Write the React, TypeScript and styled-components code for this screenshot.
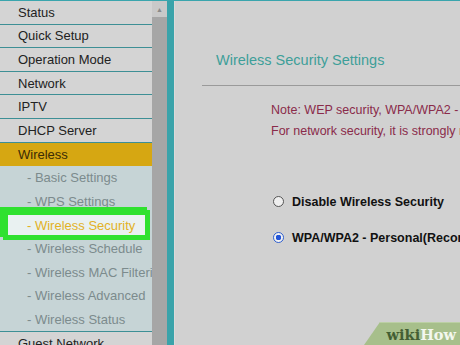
import React from "react";
import styled, { createGlobalStyle } from "styled-components";

const Global = createGlobalStyle`
  html, body { margin: 0; padding: 0; }
  body { font-family: "Liberation Sans", Arial, sans-serif; background: #d1d1d1; }
`;

const Page = styled.div`
  width: 460px;
  height: 345px;
  display: flex;
  overflow: hidden;
  border-top: 1px solid #3aa5ad;
  box-sizing: border-box;
  position: relative;
`;

const Sidebar = styled.nav`
  width: 152px;
  flex: none;
  display: flex;
  flex-direction: column;
  background: #d4d4d4;
`;

const MenuRow = styled.div<{ $active?: boolean }>`
  height: 23.6px;
  flex: none;
  box-sizing: border-box;
  display: flex;
  align-items: center;
  padding-left: 18px;
  font-size: 13px;
  color: ${(p) => (p.$active ? "#3a2c05" : "#222")};
  white-space: nowrap;
  border-bottom: ${(p) => (p.$active ? "none" : "1.6px solid #3d8f95")};
  background: ${(p) => (p.$active ? "#d6a712" : "#d4d4d4")};
`;

const SubMenu = styled.div`
  display: flex;
  flex-direction: column;
  background: #c6d4d6;
  border-bottom: 1.6px solid #3d8f95;
`;

const SubRow = styled.div`
  height: 23.6px;
  display: flex;
  align-items: center;
  padding-left: 27px;
  font-size: 13px;
  color: #7c8b8d;
  white-space: nowrap;
  overflow: hidden;
`;

const HighlightRow = styled.div`
  height: 23.6px;
  display: flex;
  align-items: center;
  padding: 0 7px 0 8px;
`;

const Mark = styled.div`
  flex: 1;
  height: 20px;
  display: flex;
  align-items: center;
  padding-left: 19px;
  font-size: 13px;
  color: #e2b126;
  background: #e9f1f1;
  white-space: nowrap;
  box-shadow: 0 0 0 5px #2fe12f, -3px -3px 0 5px #2fe12f;
  position: relative;
  z-index: 1;
`;

const Scrollbar = styled.div`
  width: 15px;
  flex: none;
  display: flex;
  flex-direction: column;
  background: #a6a6a6;
`;

const ScrollButton = styled.div`
  height: 16px;
  background: #c9c9c9;
  display: flex;
  align-items: center;
  justify-content: center;
  color: #8a8a8a;
  font-size: 7px;
`;

const Divider = styled.div`
  width: 7px;
  flex: none;
  background: #3aa3aa;
  border-right: 1px solid #dadada;
`;

const Main = styled.main`
  flex: 1;
  min-width: 0;
  background: #d1d1d1;
  overflow: hidden;
  display: flex;
  flex-direction: column;
`;

const Heading = styled.h2`
  margin: 51px 0 0 41px;
  font-size: 14.5px;
  line-height: 17px;
  font-weight: normal;
  color: #3e9f99;
  white-space: nowrap;
`;

const Rule = styled.div`
  margin: 16px 0 0 27px;
  height: 1px;
  background: #9a9a9a;
`;

const Note = styled.p`
  margin: 13.5px 0 0 96px;
  font-size: 12.5px;
  line-height: 21px;
  color: #8a2b4a;
  white-space: nowrap;
`;

const Options = styled.div`
  margin: 50px 0 0 97.5px;
  display: flex;
  flex-direction: column;
  gap: 16px;
`;

const Option = styled.label`
  height: 20px;
  display: flex;
  align-items: center;
  gap: 8.5px;
  font-size: 12.5px;
  font-weight: bold;
  color: #111;
  white-space: nowrap;
`;

const Radio = styled.span<{ $checked?: boolean }>`
  width: 11px;
  height: 11px;
  flex: none;
  box-sizing: border-box;
  border-radius: 50%;
  border: 1px solid ${(p) => (p.$checked ? "#2f5fd0" : "#555")};
  background: ${(p) =>
    p.$checked
      ? "radial-gradient(circle, #2456d8 0 2.6px, #f2f2f2 3px)"
      : "#efefef"};
`;

const Badge = styled.div`
  position: absolute;
  right: 0;
  bottom: 0;
  width: 96px;
  height: 23px;
  background: #a7bf8b;
  border-top: 1px solid #bcd0a5;
  clip-path: polygon(16px 0, 100% 0, 100% 100%, 0 100%);
  display: flex;
  align-items: center;
  justify-content: flex-end;
  padding-right: 4px;
  box-sizing: border-box;
  font-family: "DejaVu Serif", "Liberation Serif", serif;
  font-weight: bold;
  font-size: 14.5px;
`;

const Wiki = styled.span`
  color: #435e33;
`;

const How = styled.span`
  color: #f3f7ee;
`;

const mainItems = ["Status", "Quick Setup", "Operation Mode", "Network", "IPTV", "DHCP Server"];

export default function App() {
  return (
    <>
      <Global />
      <Page>
        <Sidebar>
          {mainItems.map((t) => (
            <MenuRow key={t}>{t}</MenuRow>
          ))}
          <MenuRow $active>Wireless</MenuRow>
          <SubMenu>
            <SubRow>- Basic Settings</SubRow>
            <SubRow>- WPS Settings</SubRow>
            <HighlightRow>
              <Mark>- Wireless Security</Mark>
            </HighlightRow>
            <SubRow>- Wireless Schedule</SubRow>
            <SubRow>- Wireless MAC Filteri</SubRow>
            <SubRow>- Wireless Advanced</SubRow>
            <SubRow>- Wireless Status</SubRow>
          </SubMenu>
          <MenuRow>Guest Network</MenuRow>
        </Sidebar>
        <Scrollbar>
          <ScrollButton>▲</ScrollButton>
        </Scrollbar>
        <Divider />
        <Main>
          <Heading>Wireless Security Settings</Heading>
          <Rule />
          <Note>
            Note: WEP security, WPA/WPA2 - Enterprise authentication are not supported
            <br />
            For network security, it is strongly recommended to enable wireless security
          </Note>
          <Options>
            <Option>
              <Radio />
              Disable Wireless Security
            </Option>
            <Option>
              <Radio $checked />
              WPA/WPA2 - Personal(Recommended)
            </Option>
          </Options>
        </Main>
        <Badge>
          <Wiki>wiki</Wiki>
          <How>How</How>
        </Badge>
      </Page>
    </>
  );
}
